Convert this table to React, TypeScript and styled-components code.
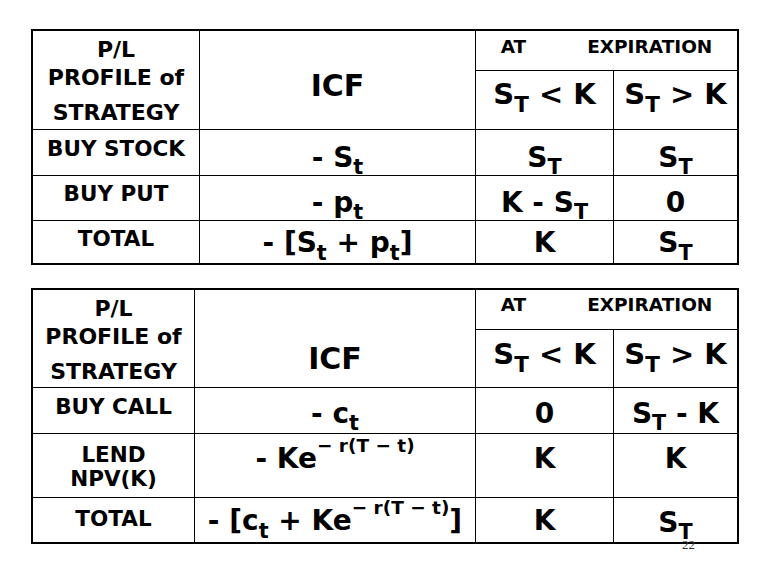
import React from 'react';
import styled, { createGlobalStyle } from 'styled-components';

const GlobalStyle = createGlobalStyle`
  html, body {
    margin: 0;
    padding: 0;
    background: #fff;
  }
  body {
    width: 759px;
    height: 576px;
    overflow: hidden;
  }
`;

const Slide = styled.div`
  position: relative;
  width: 759px;
  height: 576px;
  box-sizing: border-box;
  padding: 29px 0 0 31px;
  display: flex;
  flex-direction: column;
  gap: 23px;
  font-family: "DejaVu Sans", Verdana, sans-serif;
  font-weight: 700;
  color: #000;
`;

const Table = styled.div<{ $cols: string; $rows: string }>`
  display: grid;
  grid-template-columns: ${({ $cols }) => $cols};
  grid-template-rows: ${({ $rows }) => $rows};
  gap: 1px;
  width: 708px;
  box-sizing: border-box;
  border: 2px solid #000;
  background: #000;
`;

const Cell = styled.div<{ $pt: number; $col?: string; $row?: string }>`
  grid-column: ${({ $col }) => $col ?? 'auto'};
  grid-row: ${({ $row }) => $row ?? 'auto'};
  background: #fff;
  padding-top: ${({ $pt }) => $pt}px;
  display: flex;
  flex-direction: column;
  align-items: center;
  white-space: nowrap;
`;

const HeadLabel = styled.div`
  font-size: 22px;
  text-align: center;
`;

const Line = styled.span<{ $gap?: number; $lh?: number }>`
  display: block;
  line-height: ${({ $lh }) => $lh ?? 28}px;
  margin-top: ${({ $gap }) => $gap ?? 0}px;
`;

const Label = styled.div`
  font-size: 21.5px;
  line-height: 1;
  text-align: center;
`;

const Icf = styled.div`
  font-size: 30px;
  line-height: 1;
`;

const Expiry = styled.div`
  display: flex;
  gap: 61px;
  font-size: 18.5px;
  line-height: 1;
`;

const Cond = styled.div`
  font-size: 29px;
  line-height: 1;
`;

const Value = styled.div`
  font-size: 28px;
  line-height: 1;
`;

const Sub = styled.span`
  position: relative;
  top: 0.38em;
  font-size: 0.74em;
`;

const Sup = styled.span`
  position: relative;
  top: -0.86em;
  font-size: 0.66em;
`;

const PageNo = styled.div`
  position: absolute;
  left: 682px;
  top: 537px;
  font-family: "Liberation Serif", serif;
  font-weight: 400;
  font-size: 13px;
  color: #333;
`;

const ST = () => (
  <>
    S<Sub>T</Sub>
  </>
);

const Exp = () => <Sup>− r(T − t)</Sup>;

const Header = ({ icfPt, expPt, condPt }: { icfPt: number; expPt: number; condPt: number }) => (
  <>
    <Cell $pt={5} $col="1" $row="1 / span 2">
      <HeadLabel>
        <Line>P/L</Line>
        <Line>PROFILE of</Line>
        <Line $gap={6.5}>STRATEGY</Line>
      </HeadLabel>
    </Cell>
    <Cell $pt={icfPt} $col="2" $row="1 / span 2">
      <Icf>ICF</Icf>
    </Cell>
    <Cell $pt={expPt} $col="3 / span 2" $row="1">
      <Expiry>
        <span>AT</span>
        <span>EXPIRATION</span>
      </Expiry>
    </Cell>
    <Cell $pt={condPt} $col="3" $row="2">
      <Cond>
        <ST /> &lt; K
      </Cond>
    </Cell>
    <Cell $pt={condPt} $col="4" $row="2">
      <Cond>
        <ST /> &gt; K
      </Cond>
    </Cell>
  </>
);

export default function App() {
  return (
    <>
      <GlobalStyle />
      <Slide>
        <Table $cols="166px 275px 137px 123px" $rows="39px 58px 45px 44px 42px">
          <Header icfPt={39.5} expPt={7} condPt={8.6} />

          <Cell $pt={7.5}><Label>BUY STOCK</Label></Cell>
          <Cell $pt={13.5}><Value>- S<Sub>t</Sub></Value></Cell>
          <Cell $pt={13.5}><Value><ST /></Value></Cell>
          <Cell $pt={13.5}><Value><ST /></Value></Cell>

          <Cell $pt={6.5}><Label>BUY PUT</Label></Cell>
          <Cell $pt={12.5}><Value>- p<Sub>t</Sub></Value></Cell>
          <Cell $pt={12.5}><Value>K - <ST /></Value></Cell>
          <Cell $pt={12.5}><Value>0</Value></Cell>

          <Cell $pt={6.5}><Label>TOTAL</Label></Cell>
          <Cell $pt={8}><Value>- [S<Sub>t</Sub> + p<Sub>t</Sub>]</Value></Cell>
          <Cell $pt={8}><Value>K</Value></Cell>
          <Cell $pt={8}><Value><ST /></Value></Cell>
        </Table>

        <Table $cols="161px 280px 137px 123px" $rows="39px 57px 45px 63px 44px">
          <Header icfPt={53.5} expPt={6} condPt={9.6} />

          <Cell $pt={7.5}><Label>BUY CALL</Label></Cell>
          <Cell $pt={11.5}><Value>- c<Sub>t</Sub></Value></Cell>
          <Cell $pt={11.5}><Value>0</Value></Cell>
          <Cell $pt={11.5}><Value><ST /> - K</Value></Cell>

          <Cell $pt={9}>
            <Label>
              <Line $lh={24}>LEND</Line>
              <Line $lh={24}>NPV(K)</Line>
            </Label>
          </Cell>
          <Cell $pt={10.5}><Value>- Ke<Exp /></Value></Cell>
          <Cell $pt={10.5}><Value>K</Value></Cell>
          <Cell $pt={10.5}><Value>K</Value></Cell>

          <Cell $pt={9.5}><Label>TOTAL</Label></Cell>
          <Cell $pt={9}><Value>- [c<Sub>t</Sub> + Ke<Exp />]</Value></Cell>
          <Cell $pt={9}><Value>K</Value></Cell>
          <Cell $pt={10.5}><Value><ST /></Value></Cell>
        </Table>

        <PageNo>22</PageNo>
      </Slide>
    </>
  );
}
